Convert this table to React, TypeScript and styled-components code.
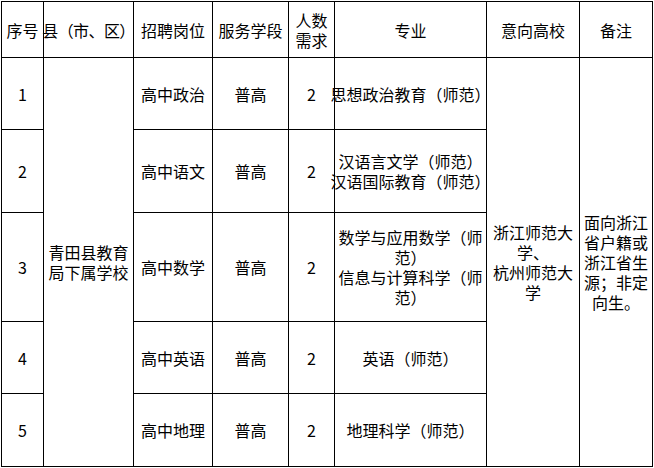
import React from "react";
import styled, { createGlobalStyle } from "styled-components";

const GlobalStyle = createGlobalStyle`
  html, body {
    margin: 0;
    padding: 0;
    background: #ffffff;
  }
  body {
    font-family: "Noto Sans CJK SC", "Noto Sans", sans-serif;
    color: #000;
  }
`;

const Page = styled.div`
  padding: 1px 0 0 1px;
`;

const Table = styled.div`
  display: grid;
  grid-template-columns: 41px 89px 78px 75px 45px 151px 92px 72px;
  grid-template-rows: 55px 71px 82px 108px 71px 72px;
  gap: 1px;
  padding: 1px;
  background: #000;
  width: max-content;
`;

const Cell = styled.div<{ $rows?: number; $spacing?: number }>`
  background: #fff;
  display: flex;
  flex-direction: column;
  align-items: center;
  justify-content: center;
  text-align: center;
  white-space: nowrap;
  font-size: 16px;
  line-height: 20px;
  letter-spacing: ${(p) => (p.$spacing ? `${p.$spacing}px` : "0")};
  grid-row: ${(p) => (p.$rows ? `span ${p.$rows}` : "auto")};
  min-width: 0;
`;

const Line = styled.span`
  display: block;
`;

type Row = {
  no: string;
  post: string;
  stage: string;
  count: string;
  major: string[];
};

const rows: Row[] = [
  { no: "1", post: "高中政治", stage: "普高", count: "2", major: ["思想政治教育（师范）"] },
  {
    no: "2",
    post: "高中语文",
    stage: "普高",
    count: "2",
    major: ["汉语言文学（师范）", "汉语国际教育（师范）"],
  },
  {
    no: "3",
    post: "高中数学",
    stage: "普高",
    count: "2",
    major: ["数学与应用数学（师", "范）", "信息与计算科学（师", "范）"],
  },
  { no: "4", post: "高中英语", stage: "普高", count: "2", major: ["英语（师范）"] },
  { no: "5", post: "高中地理", stage: "普高", count: "2", major: ["地理科学（师范）"] },
];

const Lines = ({ items }: { items: string[] }) => (
  <>
    {items.map((t, i) => (
      <Line key={i}>{t}</Line>
    ))}
  </>
);

export default function App() {
  return (
    <Page>
      <GlobalStyle />
      <Table>
        <Cell>序号</Cell>
        <Cell $spacing={-0.6}>县（市、区）</Cell>
        <Cell>招聘岗位</Cell>
        <Cell>服务学段</Cell>
        <Cell>
          <Lines items={["人数", "需求"]} />
        </Cell>
        <Cell>专业</Cell>
        <Cell>意向高校</Cell>
        <Cell>备注</Cell>

        {rows.map((r, i) => (
          <React.Fragment key={r.no}>
            <Cell>{r.no}</Cell>
            {i === 0 && (
              <Cell $rows={5}>
                <Lines items={["青田县教育", "局下属学校"]} />
              </Cell>
            )}
            <Cell>{r.post}</Cell>
            <Cell>{r.stage}</Cell>
            <Cell>{r.count}</Cell>
            <Cell>
              <Lines items={r.major} />
            </Cell>
            {i === 0 && (
              <>
                <Cell $rows={5}>
                  <Lines items={["浙江师范大", "学、", "杭州师范大", "学"]} />
                </Cell>
                <Cell $rows={5}>
                  <Lines items={["面向浙江", "省户籍或", "浙江省生", "源；非定", "向生。"]} />
                </Cell>
              </>
            )}
          </React.Fragment>
        ))}
      </Table>
    </Page>
  );
}
